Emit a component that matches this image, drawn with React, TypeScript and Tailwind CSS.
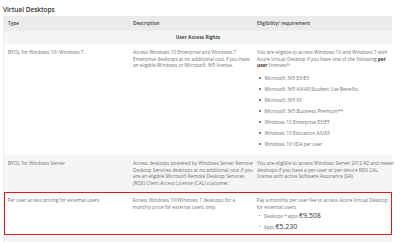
import React from "react";

type Cell = React.ReactNode;

function Bullet({ children, className = "" }: { children: React.ReactNode; className?: string }) {
  return (
    <div className={`flex items-center ${className}`}>
      <span className="w-[1.5px] h-[1.5px] rounded-full bg-[#555] ml-[2px] mr-[4px] shrink-0" />
      <span>{children}</span>
    </div>
  );
}

function Row({
  cells,
  className = "",
  cellClass = "pl-[4px]",
}: {
  cells: Cell[];
  className?: string;
  cellClass?: string;
}) {
  return (
    <div className={`grid grid-cols-[125px_124px_1fr] ${className}`}>
      {cells.map((c, i) => (
        <div key={i} className={`whitespace-nowrap ${cellClass}`}>
          {c}
        </div>
      ))}
    </div>
  );
}

const licenses = [
  "Microsoft 365 E3/E5",
  "Microsoft 365 A3/A5/Student Use Benefits",
  "Microsoft 365 F3",
  "Microsoft 365 Business Premium**",
  "Windows 10 Enterprise E3/E5",
  "Windows 10 Education A3/A5",
  "Windows 10 VDA per user",
];

export default function App() {
  return (
    <div className="w-[400px] h-[242px] bg-white overflow-hidden font-['Open_Sans',sans-serif] text-[#707070] text-[4.8px] leading-[6.5px]">
      <div className="pl-[3px] pr-[8px] pt-[6px]">
        <h2 className="text-[6.5px] leading-[8px] font-semibold text-[#333] mb-[2px]">
          Virtual Desktops
        </h2>

        <div className="border-l border-[#eeeeee]">
          {/* Header */}
          <Row
            className="h-[15px] items-center bg-[#ebebeb] font-semibold text-[#444]"
            cells={["Type", "Description", "Eligibility/ requirement"]}
          />

          {/* Section */}
          <div className="h-[13px] flex items-center justify-center bg-[#f5f5f6] font-bold text-[#444]">
            User Access Rights
          </div>

          {/* BYOL Windows 10 */}
          <Row
            className="h-[111px] pt-[5px] bg-white"
            cells={[
              "BYOL for Windows 10/ Windows 7",
              <>
                Access Windows 10 Enterprise and Windows 7
                <br />
                Enterprise desktops at no additional cost if you have
                <br />
                an eligible Windows or Microsoft 365 license.
              </>,
              <>
                <div>
                  You are eligible to access Windows 10 and Windows 7 with
                  <br />
                  Azure Virtual Desktop if you have one of the following{" "}
                  <b className="text-[#333]">per</b>
                  <br />
                  <b className="text-[#333]">user</b> licenses*:
                </div>
                <div className="mt-[6px] flex flex-col gap-[4.5px]">
                  {licenses.map((l) => (
                    <Bullet key={l}>{l}</Bullet>
                  ))}
                </div>
              </>,
            ]}
          />

          {/* BYOL Windows Server */}
          <Row
            className="h-[37px] pt-[5px] bg-[#f5f5f6]"
            cells={[
              "BYOL for Windows Server",
              <>
                Access desktops powered by Windows Server Remote
                <br />
                Desktop Services desktops at no additional cost if you
                <br />
                are an eligible Microsoft Remote Desktop Services
                <br />
                (RDS) Client Access License (CAL) customer.
              </>,
              <>
                You are eligible to access Windows Server 2012 R2 and newer
                <br />
                desktops if you have a per-user or per-device RDS CAL
                <br />
                license with active Software Assurance (SA).
              </>,
            ]}
          />

          {/* Per user access pricing */}
          <Row
            className="h-[43px] pt-[4px] bg-white border-[1.5px] border-[#e3161e]"
            cellClass="pl-[2.5px] first:pl-[2.5px]"
            cells={[
              "Per user access pricing for external users",
              <>
                Access Windows 10/Windows 7 desktops for a
                <br />
                monthly price for external users only.
              </>,
              <>
                <div>
                  Pay a monthly per user fee to access Azure Virtual Desktop
                  <br />
                  for external users
                </div>
                <Bullet className="mt-[1px] text-[4.4px]">
                  Desktops + apps{" "}
                  <span className="text-[7px] leading-[9px] text-[#333]">€9.508</span>
                </Bullet>
                <Bullet className="mt-[2px] text-[4.4px]">
                  Apps{" "}
                  <span className="text-[7px] leading-[9px] text-[#333]">€5.230</span>
                </Bullet>
              </>,
            ]}
          />

          <div className="h-[10px] mt-[1px] bg-[#f5f5f6]" />
        </div>
      </div>
    </div>
  );
}
